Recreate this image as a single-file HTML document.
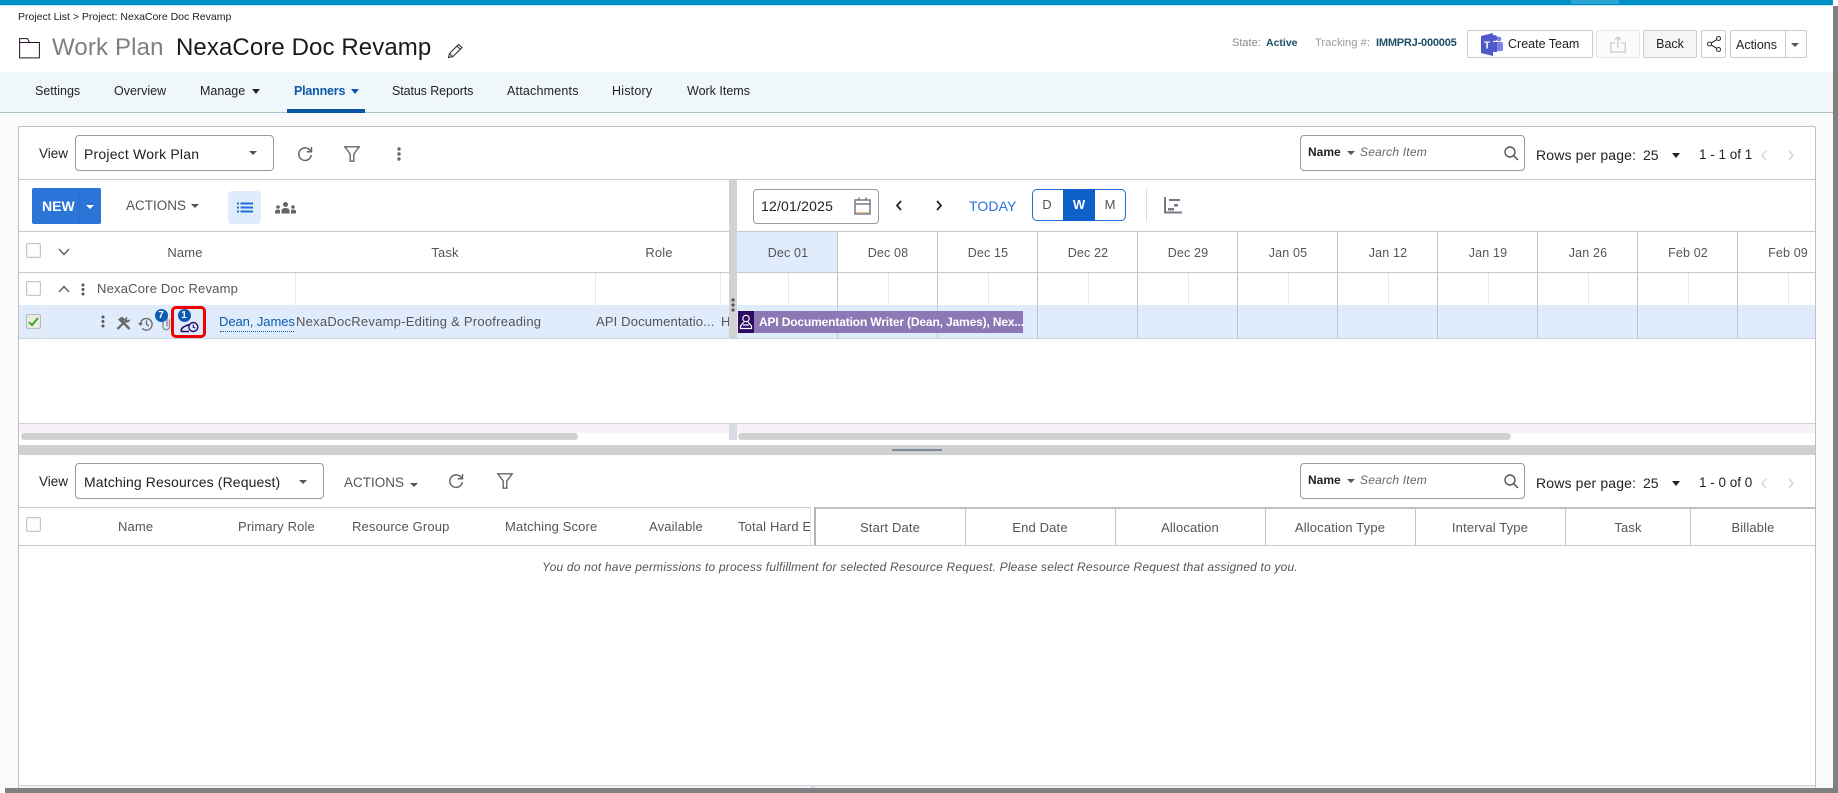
<!DOCTYPE html>
<html lang="en"><head><meta charset="utf-8"><title>Work Plan</title>
<style>
html,body{margin:0;padding:0;width:1838px;height:793px;overflow:hidden;background:#fff;font-family:"Liberation Sans",sans-serif;color:#333}
.a{position:absolute;box-sizing:border-box}
.t{position:absolute;white-space:nowrap;line-height:20px;height:20px;font-size:13px}
.c{transform:translateX(-50%)}
.h{color:#555;font-size:13px;letter-spacing:.15px}
.sel{position:absolute;box-sizing:border-box;border:1px solid #9a9a9a;border-radius:4px;background:#fff}
.car{position:absolute;width:0;height:0;border-left:4px solid transparent;border-right:4px solid transparent;border-top:4px solid #555}
.btn{position:absolute;box-sizing:border-box;border:1px solid #ccc;border-radius:2px;background:#fff}
.cb{position:absolute;box-sizing:border-box;width:15px;height:15px;border:1px solid #c4c4c4;border-radius:2px;background:#fff;box-shadow:inset 0 0 2px #ddd}
.v{position:absolute;width:1px}
svg{position:absolute;overflow:visible}
</style></head><body>

<!-- top bar -->
<div class="a" style="left:0;top:0;width:1833px;height:5px;background:#0090c8"></div>
<div class="a" style="left:0;top:5px;width:1833px;height:1px;background:#bfe3f1"></div>
<div class="a" style="left:1571px;top:0;width:48px;height:4px;background:#2ba5d3"></div>

<!-- header -->
<div class="t" style="left:18px;top:7px;font-size:10.5px;color:#222">Project List &gt; Project: NexaCore Doc Revamp</div>
<svg style="left:19px;top:38px" width="21" height="21" viewBox="0 0 21 21"><path d="M0.6 19.9V0.6H8.5L10.5 4.5H20.4V19.9Z M0.6 4.5H10.5" fill="none" stroke="#2a1030" stroke-width="1"/></svg>
<div class="t" style="left:52px;top:38px;font-size:24px;color:#7f7f7f;letter-spacing:.15px">Work Plan</div>
<div class="t" style="left:176px;top:38px;font-size:24px;color:#1a1a1a;letter-spacing:.1px">NexaCore Doc Revamp</div>
<svg style="left:447px;top:43px" width="17" height="16" viewBox="0 0 17 16"><path d="M1.5 14.5L2.5 10.5L11.5 1.5L15 4.5L6 13.5ZM10 3L13.5 6.5M2.5 10.5L5.5 13.5" fill="none" stroke="#333" stroke-width="1.1"/></svg>

<div class="t" style="left:1232px;top:33px;font-size:11px;color:#8a8a8a">State:</div>
<div class="t" style="left:1266px;top:33px;font-size:10.5px;color:#1d4d66;font-weight:bold">Active</div>
<div class="t" style="left:1315px;top:33px;font-size:11.2px;color:#9a9a9a">Tracking #:</div>
<div class="t" style="left:1376px;top:33px;font-size:11px;color:#1d4d66;font-weight:bold;letter-spacing:-.2px">IMMPRJ-000005</div>

<div class="btn" style="left:1467px;top:30px;width:126px;height:28px"></div>
<svg style="left:1481px;top:33px" width="23" height="23" viewBox="0 0 23 23"><circle cx="18" cy="6" r="2.4" fill="#7b83eb"/><circle cx="13.5" cy="5" r="3" fill="#5059c9"/><rect x="13" y="9" width="9" height="9" rx="1.5" fill="#7b83eb"/><path d="M0 3L12 0V23L0 20Z" fill="#5059c9"/><rect x="11" y="9" width="5" height="10" fill="#5059c9"/><text x="6" y="15.5" font-size="10" font-weight="bold" fill="#fff" text-anchor="middle" font-family="Liberation Sans">T</text></svg>
<div class="t" style="left:1508px;top:34px;font-size:12.5px;color:#222;letter-spacing:0">Create Team</div>

<div class="btn" style="left:1596px;top:30px;width:44px;height:28px;border-color:#e6e6e6;background:#fbfbfb"></div>
<svg style="left:1610px;top:36px" width="16" height="17" viewBox="0 0 16 17"><path d="M5 7H0.7V16H15.3V7H11M8 12V1M5 4L8 1L11 4" fill="none" stroke="#ccc" stroke-width="1.3"/></svg>

<div class="btn" style="left:1643px;top:30px;width:54px;height:28px;background:#f5f5f5"></div>
<div class="t c" style="left:1670px;top:34px;font-size:12.5px;color:#222">Back</div>
<div class="btn" style="left:1701px;top:30px;width:25px;height:28px"></div>
<svg style="left:1707px;top:36px" width="15" height="16" viewBox="0 0 15 16"><g fill="none" stroke="#333" stroke-width="1.1"><circle cx="11.5" cy="2.5" r="2"/><circle cx="2.5" cy="8" r="2"/><circle cx="11.5" cy="13.5" r="2"/><path d="M9.8 3.6L4.2 7M4.2 9L9.8 12.4"/></g></svg>
<div class="btn" style="left:1730px;top:30px;width:77px;height:28px"></div>
<div class="a" style="left:1785px;top:30px;width:1px;height:28px;background:#ccc"></div>
<div class="t" style="left:1736px;top:35px;font-size:12.5px;color:#222">Actions</div>
<div class="car" style="left:1791px;top:43px;border-top-color:#555"></div>

<!-- nav -->
<div class="a" style="left:0;top:72px;width:1833px;height:41px;background:#f0f7fb;border-bottom:1px solid #aec3cc"></div>
<div class="t" style="left:35px;top:81px;font-size:12.5px;color:#222">Settings</div>
<div class="t" style="left:114px;top:81px;font-size:12.5px;color:#222">Overview</div>
<div class="t" style="left:200px;top:81px;font-size:12.5px;color:#222">Manage</div>
<div class="car" style="left:252px;top:89px;border-top:5px solid #222"></div>
<div class="t" style="left:294px;top:81px;font-size:12.5px;color:#0b57a8;font-weight:bold;letter-spacing:-.2px">Planners</div>
<div class="car" style="left:351px;top:89px;border-top:5px solid #0b57a8"></div>
<div class="a" style="left:287px;top:109px;width:78px;height:4px;background:#0856a6"></div>
<div class="t" style="left:392px;top:81px;font-size:12.5px;color:#222;letter-spacing:-.1px">Status Reports</div>
<div class="t" style="left:507px;top:81px;font-size:12.5px;color:#222;letter-spacing:.2px">Attachments</div>
<div class="t" style="left:612px;top:81px;font-size:12.5px;color:#222;letter-spacing:.2px">History</div>
<div class="t" style="left:687px;top:81px;font-size:12.5px;color:#222;letter-spacing:0">Work Items</div>

<!-- page bg + panel -->
<div class="a" style="left:0;top:113px;width:1833px;height:675px;background:#fafafa"></div>
<div class="a" style="left:18px;top:126px;width:1798px;height:662px;background:#fff;border:1px solid #c0c0c0;border-bottom:0;border-radius:2px 2px 0 0"></div>

<!-- toolbar 1 -->
<div class="t" style="left:39px;top:144px;font-size:13.5px;color:#222">View</div>
<div class="sel" style="left:75px;top:135px;width:199px;height:36px"></div>
<div class="t" style="left:84px;top:144px;font-size:14px;color:#222;letter-spacing:.2px">Project Work Plan</div>
<div class="car" style="left:249px;top:151px"></div>
<svg style="left:297px;top:146px" width="16" height="16" viewBox="0 0 16 16"><path d="M13.5 5A6.3 6.3 0 1 0 14.3 9" fill="none" stroke="#666" stroke-width="1.5"/><path d="M14.5 1V5.8H9.8" fill="none" stroke="#666" stroke-width="1.5"/></svg>
<svg style="left:344px;top:146px" width="16" height="16" viewBox="0 0 16 16"><path d="M0.8 0.8H15.2L9.8 8V15.2H6.2V8Z" fill="none" stroke="#666" stroke-width="1.4"/></svg>
<svg style="left:397px;top:147px" width="4" height="14" viewBox="0 0 4 14"><g fill="#666"><circle cx="2" cy="2" r="1.7"/><circle cx="2" cy="7" r="1.7"/><circle cx="2" cy="12" r="1.7"/></g></svg>

<div class="sel" style="left:1300px;top:135px;width:225px;height:36px"></div>
<div class="t" style="left:1308px;top:142px;font-size:12px;color:#222;font-weight:bold">Name</div>
<div class="car" style="left:1347px;top:151px"></div>
<div class="t" style="left:1360px;top:142px;font-size:12px;color:#666;font-style:italic;letter-spacing:.2px">Search Item</div>
<svg style="left:1504px;top:146px" width="15" height="15" viewBox="0 0 15 15"><circle cx="6" cy="6" r="5" fill="none" stroke="#555" stroke-width="1.4"/><path d="M9.8 9.8L14 14" stroke="#555" stroke-width="1.5"/></svg>
<div class="t" style="left:1536px;top:145px;font-size:14px;color:#222;letter-spacing:.15px">Rows per page:</div>
<div class="t" style="left:1643px;top:145px;font-size:14px;color:#222">25</div>
<div class="car" style="left:1672px;top:153px;border-left-width:4.5px;border-right-width:4.5px;border-top:5px solid #222"></div>
<div class="t" style="left:1699px;top:145px;font-size:13.5px;color:#222">1 - 1 of 1</div>
<svg style="left:1761px;top:150px" width="34" height="11" viewBox="0 0 34 11"><path d="M5 1L1 5.5L5 10M28 1L32 5.5L28 10" fill="none" stroke="#cfcfcf" stroke-width="1.3"/></svg>

<div class="a" style="left:19px;top:179px;width:1796px;height:1px;background:#c8c8c8"></div>

<!-- toolbar 2 -->
<div class="a" style="left:32px;top:188px;width:69px;height:36px;background:#2b74d8;border-radius:2px"></div>
<div class="a" style="left:79px;top:188px;width:1px;height:36px;background:#2a6cc8"></div>
<div class="t" style="left:42px;top:196px;font-size:14px;color:#fff;font-weight:bold">NEW</div>
<div class="car" style="left:86px;top:205px;border-top-color:#fff"></div>
<div class="t" style="left:126px;top:196px;font-size:13.5px;color:#555">ACTIONS</div>
<div class="car" style="left:191px;top:204px"></div>
<div class="a" style="left:228px;top:191px;width:33px;height:33px;background:#e0ecfb;border-radius:4px"></div>
<svg style="left:237px;top:202px" width="16" height="11" viewBox="0 0 16 11"><g fill="#1d6fd6"><rect x="0" y="0.5" width="2" height="2"/><rect x="0" y="4.5" width="2" height="2"/><rect x="0" y="8.5" width="2" height="2"/><rect x="3.5" y="0.5" width="12.5" height="2"/><rect x="3.5" y="4.5" width="12.5" height="2"/><rect x="3.5" y="8.5" width="12.5" height="2"/></g></svg>
<svg style="left:275px;top:202px" width="21" height="12" viewBox="0 0 21 12"><g fill="#666"><circle cx="10.5" cy="2.5" r="2.5"/><path d="M6.5 11.5V9Q6.5 6 10.5 6T14.5 9V11.5Z"/><circle cx="3" cy="5" r="1.8"/><path d="M0 11.5V9.5Q0 7.5 3 7.5L5 8V11.5Z"/><circle cx="18" cy="5" r="1.8"/><path d="M21 11.5V9.5Q21 7.5 18 7.5L16 8V11.5Z"/></g></svg>

<div class="a" style="left:753px;top:189px;width:126px;height:35px;border:1px solid #9a9a9a;border-radius:4px"></div>
<div class="t" style="left:761px;top:196px;font-size:14px;color:#222;letter-spacing:.2px">12/01/2025</div>
<svg style="left:854px;top:197px" width="17" height="18" viewBox="0 0 17 18"><path d="M1 3H16V17H1ZM1 7H16M5 0.5V3M12 0.5V3" fill="none" stroke="#778" stroke-width="1.5"/><path d="M2 15.5H15" stroke="#e8c070" stroke-width="1"/></svg>
<svg style="left:895px;top:200px" width="50" height="11" viewBox="0 0 50 11"><path d="M6 1L2 5.5L6 10M42 1L46 5.5L42 10" fill="none" stroke="#222" stroke-width="1.7"/></svg>
<div class="t" style="left:969px;top:196px;font-size:14px;color:#2b74d8;letter-spacing:.1px">TODAY</div>
<div class="a" style="left:1032px;top:189px;width:94px;height:32px;border:1px solid #1d6fd6;border-radius:5px"></div>
<div class="a" style="left:1063px;top:189px;width:32px;height:32px;background:#0d60c8"></div>
<div class="t c" style="left:1047px;top:195px;font-size:13px;color:#555">D</div>
<div class="t c" style="left:1079px;top:195px;font-size:13px;color:#fff;font-weight:bold">W</div>
<div class="t c" style="left:1110px;top:195px;font-size:13px;color:#555">M</div>
<div class="a" style="left:1146px;top:189px;width:1px;height:33px;background:#ddd"></div>
<svg style="left:1164px;top:197px" width="18" height="17" viewBox="0 0 18 17"><path d="M1 0V15.5H18" fill="none" stroke="#778" stroke-width="2"/><rect x="5" y="2" width="11" height="2" fill="#778"/><rect x="10" y="7" width="4" height="2.5" fill="#778"/><rect x="4" y="11" width="6" height="2.5" fill="#778"/></svg>

<div class="a" style="left:19px;top:231px;width:1796px;height:1px;background:#c8c8c8"></div>

<!-- gantt today cell -->
<div class="a" style="left:737px;top:232px;width:100px;height:40px;background:#e0ecfb"></div>

<!-- grid header -->
<div class="cb" style="left:26px;top:243px"></div>
<svg style="left:58px;top:248px" width="12" height="8" viewBox="0 0 12 8"><path d="M1 1L6 6.5L11 1" fill="none" stroke="#666" stroke-width="1.5"/></svg>
<div class="t c h" style="left:185px;top:243px">Name</div>
<div class="t c h" style="left:445px;top:243px">Task</div>
<div class="t c h" style="left:659px;top:243px">Role</div>

<div class="t c h" style="left:788px;top:243px;font-size:12.5px">Dec 01</div>
<div class="t c h" style="left:888px;top:243px;font-size:12.5px">Dec 08</div>
<div class="t c h" style="left:988px;top:243px;font-size:12.5px">Dec 15</div>
<div class="t c h" style="left:1088px;top:243px;font-size:12.5px">Dec 22</div>
<div class="t c h" style="left:1188px;top:243px;font-size:12.5px">Dec 29</div>
<div class="t c h" style="left:1288px;top:243px;font-size:12.5px">Jan 05</div>
<div class="t c h" style="left:1388px;top:243px;font-size:12.5px">Jan 12</div>
<div class="t c h" style="left:1488px;top:243px;font-size:12.5px">Jan 19</div>
<div class="t c h" style="left:1588px;top:243px;font-size:12.5px">Jan 26</div>
<div class="t c h" style="left:1688px;top:243px;font-size:12.5px">Feb 02</div>
<div class="t c h" style="left:1788px;top:243px;font-size:12.5px">Feb 09</div>

<div class="a" style="left:19px;top:272px;width:1796px;height:1px;background:#c8c8c8"></div>

<!-- selected row bg -->
<div class="a" style="left:19px;top:305px;width:1796px;height:33px;background:#e0ecfb"></div>
<div class="a" style="left:19px;top:338px;width:1796px;height:1px;background:#c8d4e0"></div>

<!-- left col lines -->
<div class="v" style="left:295px;top:273px;height:32px;background:#eaeaea"></div>
<div class="v" style="left:595px;top:273px;height:65px;background:#e6e8ec"></div>
<div class="v" style="left:720px;top:273px;height:32px;background:#eaeaea"></div>
<div class="v" style="left:45px;top:305px;height:33px;background:#e8eef6"></div>

<!-- row 1 -->
<div class="cb" style="left:26px;top:281px"></div>
<svg style="left:58px;top:285px" width="12" height="8" viewBox="0 0 12 8"><path d="M1 7L6 1.5L11 7" fill="none" stroke="#666" stroke-width="1.5"/></svg>
<svg style="left:81px;top:283px" width="4" height="13" viewBox="0 0 4 13"><g fill="#555"><circle cx="2" cy="2" r="1.5"/><circle cx="2" cy="6.5" r="1.5"/><circle cx="2" cy="11" r="1.5"/></g></svg>
<div class="t" style="left:97px;top:279px;color:#555;letter-spacing:.2px">NexaCore Doc Revamp</div>

<!-- row 2 -->
<div class="cb" style="left:26px;top:314px;background:#e9efe2;border-color:#bbb"></div>
<svg style="left:28px;top:316px" width="11" height="11" viewBox="0 0 11 11"><path d="M1 6L4 9L10 2" fill="none" stroke="#3f9b1d" stroke-width="1.8"/></svg>
<svg style="left:101px;top:315px" width="4" height="13" viewBox="0 0 4 13"><g fill="#555"><circle cx="2" cy="2" r="1.5"/><circle cx="2" cy="6.5" r="1.5"/><circle cx="2" cy="11" r="1.5"/></g></svg>
<svg style="left:116px;top:316px" width="15" height="14" viewBox="0 0 15 14"><g fill="#666"><path d="M13.5 13L5 4.2" stroke="#666" stroke-width="2.4"/><path d="M1.5 13L9 5.5" stroke="#666" stroke-width="2.2"/><path d="M2 3.5L6 0.5L9 3.5L5.5 7Z"/><path d="M8.5 5.5Q8 1.5 12 0.8L10.5 3L12 4.5L14.2 3Q14 7 9.5 6.5Z"/></g></svg>
<svg style="left:138px;top:317px" width="15" height="14" viewBox="0 0 15 14"><path d="M2.5 7A5.8 5.8 0 1 1 4.3 11.5M8.5 3.5V7.3L11 9" fill="none" stroke="#666" stroke-width="1.3"/><path d="M0 6H5L2.5 9Z" fill="#666"/></svg>
<svg style="left:161px;top:316px" width="10" height="15" viewBox="0 0 10 15"><path d="M8.5 3.5V10.5A3.2 3.2 0 0 1 2 10.5V3A2 2 0 0 1 6 3V10.5" fill="none" stroke="#929292" stroke-width="1.4"/></svg>
<div class="a" style="left:154.5px;top:309px;width:13px;height:13px;border-radius:50%;background:#0b5cb0;color:#fff;font-size:10px;font-weight:bold;line-height:13px;text-align:center">7</div>
<div class="a" style="left:171px;top:306px;width:35px;height:32px;border:3.5px solid #f00000;border-radius:5px"></div>
<svg style="left:180px;top:321px" width="19" height="12" viewBox="0 0 19 12"><path d="M1 10.5H9M1 10.5Q1 7 4.5 5.5L9 3.5" fill="none" stroke="#2a0a6a" stroke-width="1.6"/><circle cx="13.3" cy="6" r="4.5" fill="#e0ecfb" stroke="#2a0a6a" stroke-width="1.4"/><path d="M13.3 3.5V6.3L15.3 7" fill="none" stroke="#2a0a6a" stroke-width="1.1"/></svg>
<div class="a" style="left:177.5px;top:309px;width:13px;height:13px;border-radius:50%;background:#0b5cb0;color:#fff;font-size:10px;font-weight:bold;line-height:13px;text-align:center">1</div>
<div class="t" style="left:219px;top:312px;color:#0b5cb0;letter-spacing:-.07px">Dean, James</div>
<div class="a" style="left:220px;top:331px;width:74px;height:0;border-bottom:1px dotted #0b5cb0"></div>
<div class="t" style="left:296px;top:312px;color:#555;letter-spacing:.25px">NexaDocRevamp-Editing &amp; Proofreading</div>
<div class="t" style="left:596px;top:312px;color:#555;letter-spacing:.15px">API Documentatio...</div>
<div class="t" style="left:721px;top:312px;color:#555">H</div>

<!-- splitter -->
<div class="a" style="left:729px;top:180px;width:8px;height:158px;background:#d2d2d2"></div>
<svg style="left:731px;top:298px" width="4" height="14" viewBox="0 0 4 14"><g fill="#555"><circle cx="2" cy="2" r="1.6"/><circle cx="2" cy="7" r="1.6"/><circle cx="2" cy="12" r="1.6"/></g></svg>

<!-- gantt lines -->
<div class="v" style="left:837px;top:231px;height:107px;background:#c4c4c4"></div>
<div class="v" style="left:937px;top:231px;height:107px;background:#c4c4c4"></div>
<div class="v" style="left:1037px;top:231px;height:107px;background:#c4c4c4"></div>
<div class="v" style="left:1137px;top:231px;height:107px;background:#c4c4c4"></div>
<div class="v" style="left:1237px;top:231px;height:107px;background:#c4c4c4"></div>
<div class="v" style="left:1337px;top:231px;height:107px;background:#c4c4c4"></div>
<div class="v" style="left:1437px;top:231px;height:107px;background:#c4c4c4"></div>
<div class="v" style="left:1537px;top:231px;height:107px;background:#c4c4c4"></div>
<div class="v" style="left:1637px;top:231px;height:107px;background:#c4c4c4"></div>
<div class="v" style="left:1737px;top:231px;height:107px;background:#c4c4c4"></div>
<div class="v" style="left:788px;top:273px;height:31px;background:#e8e8e8"></div>
<div class="v" style="left:888px;top:273px;height:31px;background:#e8e8e8"></div>
<div class="v" style="left:988px;top:273px;height:31px;background:#e8e8e8"></div>
<div class="v" style="left:1088px;top:273px;height:31px;background:#e8e8e8"></div>
<div class="v" style="left:1188px;top:273px;height:31px;background:#e8e8e8"></div>
<div class="v" style="left:1288px;top:273px;height:31px;background:#e8e8e8"></div>
<div class="v" style="left:1388px;top:273px;height:31px;background:#e8e8e8"></div>
<div class="v" style="left:1488px;top:273px;height:31px;background:#e8e8e8"></div>
<div class="v" style="left:1588px;top:273px;height:31px;background:#e8e8e8"></div>
<div class="v" style="left:1688px;top:273px;height:31px;background:#e8e8e8"></div>
<div class="v" style="left:1788px;top:273px;height:31px;background:#e8e8e8"></div>

<!-- bar -->
<div class="a" style="left:738px;top:311px;width:285px;height:22px;background:#8c78b4"></div>
<div class="a" style="left:738px;top:311px;width:16px;height:22px;background:#2c0a63"></div>
<svg style="left:739px;top:314px" width="14" height="16" viewBox="0 0 14 16"><g fill="none" stroke="#fff" stroke-width="1.2"><circle cx="7" cy="4.5" r="3.2"/><path d="M5 8L1.5 12V14.500H12.5V12L9 8M4 11H10"/></g></svg>
<div class="t" style="left:759px;top:312px;font-size:12px;color:#fff;font-weight:bold;letter-spacing:-.15px">API Documentation Writer (Dean, James), Nex...</div>

<!-- upper scrollbars -->
<div class="a" style="left:19px;top:423px;width:1796px;height:1px;background:#ccd3dc"></div>
<div class="a" style="left:19px;top:424px;width:710px;height:9px;background:#f6f2f7"></div>
<div class="a" style="left:737px;top:424px;width:1078px;height:9px;background:#f6f2f7"></div>
<div class="a" style="left:729px;top:424px;width:8px;height:16px;background:#d8dce2"></div>
<div class="a" style="left:21px;top:433px;width:557px;height:7px;background:#d0d0d0;border-radius:4px"></div>
<div class="a" style="left:738px;top:433px;width:773px;height:7px;background:#d0d0d0;border-radius:4px"></div>
<div class="a" style="left:19px;top:445px;width:1796px;height:10px;background:#d0d0d0"></div>
<div class="a" style="left:892px;top:449px;width:50px;height:2px;background:#808a96"></div>

<!-- lower toolbar -->
<div class="t" style="left:39px;top:472px;font-size:13.5px;color:#222">View</div>
<div class="sel" style="left:75px;top:463px;width:249px;height:36px"></div>
<div class="t" style="left:84px;top:472px;font-size:14px;color:#222;letter-spacing:.12px">Matching Resources (Request)</div>
<div class="car" style="left:299px;top:480px"></div>
<div class="t" style="left:344px;top:473px;font-size:13.5px;color:#555">ACTIONS</div>
<div class="car" style="left:410px;top:483px"></div>
<svg style="left:448px;top:473px" width="16" height="16" viewBox="0 0 16 16"><path d="M13.5 5A6.3 6.3 0 1 0 14.3 9" fill="none" stroke="#666" stroke-width="1.5"/><path d="M14.5 1V5.8H9.8" fill="none" stroke="#666" stroke-width="1.5"/></svg>
<svg style="left:497px;top:473px" width="16" height="16" viewBox="0 0 16 16"><path d="M0.8 0.8H15.2L9.8 8V15.2H6.2V8Z" fill="none" stroke="#666" stroke-width="1.4"/></svg>

<div class="sel" style="left:1300px;top:463px;width:225px;height:36px"></div>
<div class="t" style="left:1308px;top:470px;font-size:12px;color:#222;font-weight:bold">Name</div>
<div class="car" style="left:1347px;top:479px"></div>
<div class="t" style="left:1360px;top:470px;font-size:12px;color:#666;font-style:italic;letter-spacing:.2px">Search Item</div>
<svg style="left:1504px;top:474px" width="15" height="15" viewBox="0 0 15 15"><circle cx="6" cy="6" r="5" fill="none" stroke="#555" stroke-width="1.4"/><path d="M9.8 9.8L14 14" stroke="#555" stroke-width="1.5"/></svg>
<div class="t" style="left:1536px;top:473px;font-size:14px;color:#222;letter-spacing:.15px">Rows per page:</div>
<div class="t" style="left:1643px;top:473px;font-size:14px;color:#222">25</div>
<div class="car" style="left:1672px;top:481px;border-left-width:4.5px;border-right-width:4.5px;border-top:5px solid #222"></div>
<div class="t" style="left:1699px;top:473px;font-size:13.5px;color:#222">1 - 0 of 0</div>
<svg style="left:1761px;top:478px" width="34" height="11" viewBox="0 0 34 11"><path d="M5 1L1 5.5L5 10M28 1L32 5.5L28 10" fill="none" stroke="#cfcfcf" stroke-width="1.3"/></svg>

<!-- lower header -->
<div class="a" style="left:19px;top:507px;width:791px;height:1px;background:#c8c8c8"></div>
<div class="a" style="left:814px;top:507px;width:1001px;height:2px;background:#c0c0c0"></div>
<div class="a" style="left:19px;top:545px;width:1796px;height:1px;background:#c8c8c8"></div>
<div class="v" style="left:810px;top:507px;height:38px;background:#e4e4e4"></div>
<div class="a" style="left:814px;top:507px;width:2px;height:38px;background:#b4b4b4"></div>
<div class="v" style="left:965px;top:508px;height:37px;background:#c4c4c4"></div>
<div class="v" style="left:1115px;top:508px;height:37px;background:#c4c4c4"></div>
<div class="v" style="left:1265px;top:508px;height:37px;background:#c4c4c4"></div>
<div class="v" style="left:1415px;top:508px;height:37px;background:#c4c4c4"></div>
<div class="v" style="left:1565px;top:508px;height:37px;background:#c4c4c4"></div>
<div class="v" style="left:1690px;top:508px;height:37px;background:#c4c4c4"></div>
<div class="cb" style="left:26px;top:517px"></div>
<div class="t" style="left:118px;top:517px"><span class="h">Name</span></div>
<div class="t" style="left:238px;top:517px"><span class="h">Primary Role</span></div>
<div class="t" style="left:352px;top:517px"><span class="h">Resource Group</span></div>
<div class="t" style="left:505px;top:517px"><span class="h">Matching Score</span></div>
<div class="t" style="left:649px;top:517px"><span class="h">Available</span></div>
<div class="a" style="left:738px;top:517px;width:72px;height:20px;overflow:hidden;white-space:nowrap;line-height:20px"><span class="h">Total Hard Effort</span></div>
<div class="t c h" style="left:890px;top:518px">Start Date</div>
<div class="t c h" style="left:1040px;top:518px">End Date</div>
<div class="t c h" style="left:1190px;top:518px">Allocation</div>
<div class="t c h" style="left:1340px;top:518px">Allocation Type</div>
<div class="t c h" style="left:1490px;top:518px">Interval Type</div>
<div class="t c h" style="left:1628px;top:518px">Task</div>
<div class="t c h" style="left:1753px;top:518px">Billable</div>

<div class="t c" style="left:920px;top:557px;font-size:12px;color:#555;font-style:italic;letter-spacing:.195px">You do not have permissions to process fulfillment for selected Resource Request. Please select Resource Request that assigned to you.</div>

<!-- bottom track -->
<div class="a" style="left:19px;top:785px;width:1796px;height:1px;background:#ccd3dc"></div>
<div class="a" style="left:19px;top:786px;width:792px;height:2px;background:#f6f2f7"></div>
<div class="a" style="left:815px;top:786px;width:1000px;height:2px;background:#eef0f2"></div>
<div class="a" style="left:811px;top:785px;width:4px;height:3px;background:#d8dce2"></div>

<!-- outer grey edges -->
<div class="a" style="left:1833px;top:6px;width:5px;height:787px;background:#808080"></div>
<div class="a" style="left:5px;top:788px;width:1833px;height:5px;background:#808080"></div>

</body></html>
